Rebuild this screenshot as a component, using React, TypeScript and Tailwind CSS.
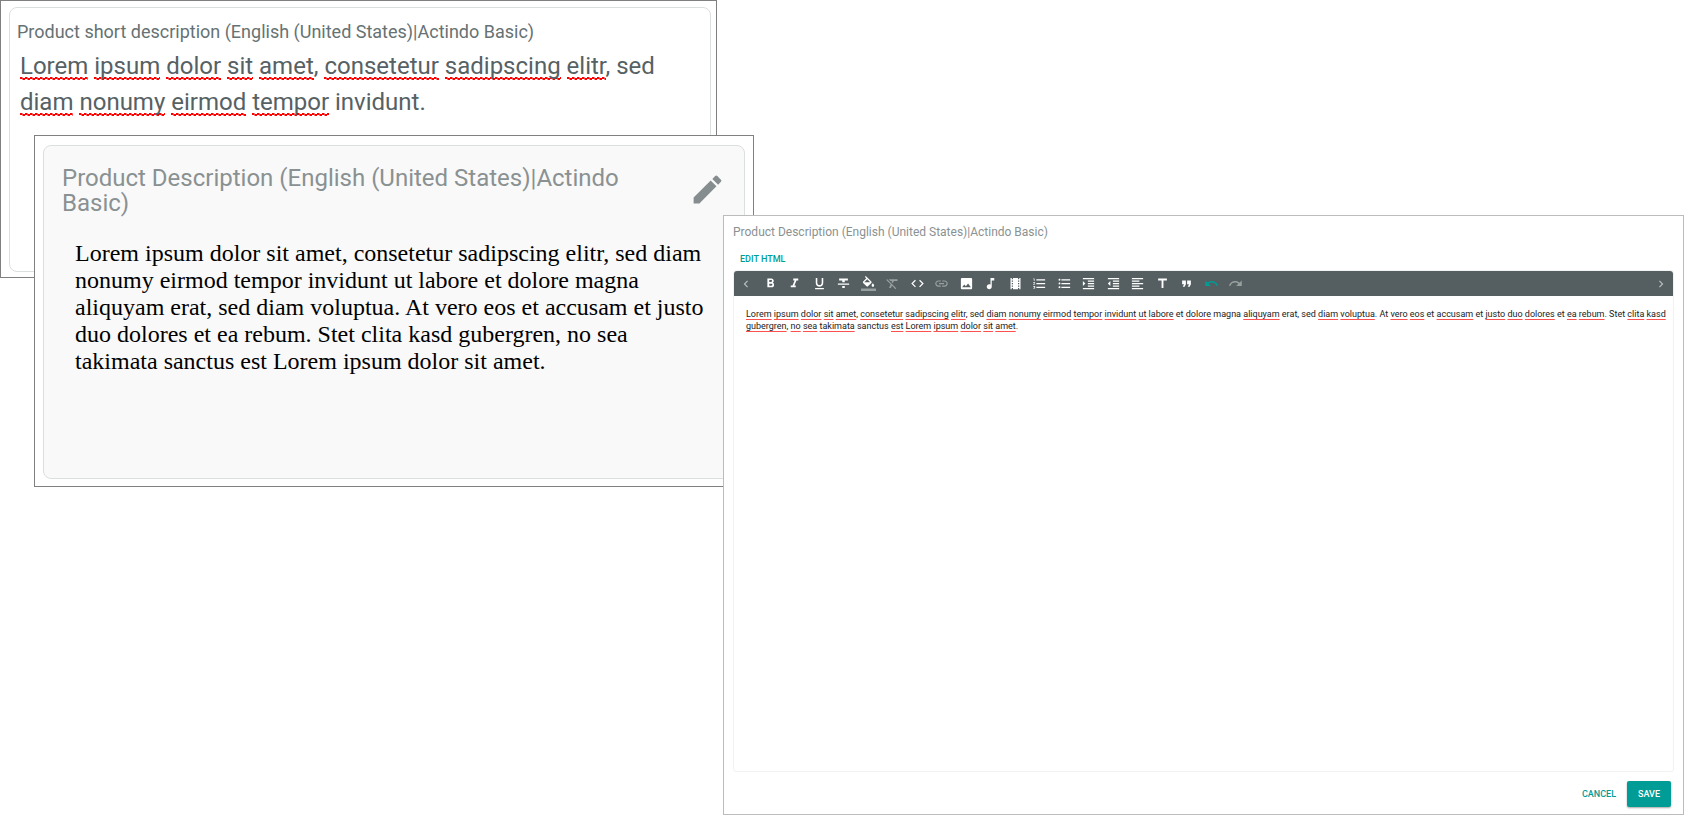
import type { ReactNode } from "react";
import {
  MdChevronLeft,
  MdChevronRight,
  MdCode,
  MdEdit,
  MdFormatAlignLeft,
  MdFormatBold,
  MdFormatClear,
  MdFormatIndentDecrease,
  MdFormatIndentIncrease,
  MdFormatItalic,
  MdFormatListBulleted,
  MdFormatListNumbered,
  MdFormatQuote,
  MdFormatStrikethrough,
  MdFormatUnderlined,
  MdImage,
  MdLink,
  MdMusicNote,
  MdRedo,
  MdTheaters,
  MdTitle,
  MdUndo,
} from "react-icons/md";

const DESCRIPTION =
  "Lorem ipsum dolor sit amet, consetetur sadipscing elitr, sed diam nonumy eirmod tempor invidunt ut labore et dolore magna aliquyam erat, sed diam voluptua. At vero eos et accusam et justo duo dolores et ea rebum. Stet clita kasd gubergren, no sea takimata sanctus est Lorem ipsum dolor sit amet.";

const SHORT_MARKED =
  "[Lorem] [ipsum] [dolor] [sit] [amet], [consetetur] [sadipscing] [elitr], sed [diam] [nonumy] [eirmod] [tempor] invidunt.";

const FULL_MARKED =
  "[Lorem] [ipsum] [dolor] [sit] [amet], [consetetur] [sadipscing] [elitr], sed [diam] [nonumy] [eirmod] [tempor] [invidunt] [ut] [labore] et [dolore] magna [aliquyam] erat, sed [diam] [voluptua]. At [vero] [eos] et [accusam] et [justo] [duo] [dolores] et [ea] [rebum]. Stet [clita] [kasd] [gubergren], [no] [sea] [takimata] sanctus [est] [Lorem] [ipsum] [dolor] [sit] [amet].";

/* Words in square brackets are flagged by the spell checker. */
function Spelled({ text, mark }: { text: string; mark: string }) {
  return (
    <>
      {text.split(/(\[[^\]]+\])/).map((part, i) =>
        part.startsWith("[") ? (
          <span key={i} className={mark}>
            {part.slice(1, -1)}
          </span>
        ) : (
          part
        ),
      )}
    </>
  );
}

const TOOLS: { label: string; icon: ReactNode; tone?: string }[] = [
  { label: "Bold", icon: <MdFormatBold /> },
  { label: "Italic", icon: <MdFormatItalic /> },
  { label: "Underline", icon: <MdFormatUnderlined /> },
  { label: "Strikethrough", icon: <MdFormatStrikethrough /> },
  { label: "Fill colour", icon: <FillIcon /> },
  { label: "Clear formatting", icon: <MdFormatClear />, tone: "text-[#99a0a0]" },
  { label: "Code", icon: <MdCode /> },
  { label: "Link", icon: <MdLink />, tone: "text-[#99a0a0]" },
  { label: "Image", icon: <MdImage /> },
  { label: "Audio", icon: <MdMusicNote /> },
  { label: "Video", icon: <MdTheaters /> },
  { label: "Numbered list", icon: <MdFormatListNumbered /> },
  { label: "Bulleted list", icon: <MdFormatListBulleted /> },
  { label: "Increase indent", icon: <MdFormatIndentIncrease /> },
  { label: "Decrease indent", icon: <MdFormatIndentDecrease /> },
  { label: "Align left", icon: <MdFormatAlignLeft /> },
  { label: "Title", icon: <MdTitle /> },
  { label: "Quote", icon: <MdFormatQuote /> },
  { label: "Undo", icon: <MdUndo />, tone: "text-[#009c95]" },
  { label: "Redo", icon: <MdRedo />, tone: "text-[#99a0a0]" },
];

function FillIcon() {
  return (
    <svg viewBox="0 0 24 24" width="1em" height="1em" fill="currentColor">
      <path d="M16.56 8.94 7.62 0 6.21 1.41l2.38 2.38-5.15 5.15c-.59.59-.59 1.54 0 2.12l5.5 5.5c.29.29.68.44 1.06.44s.77-.15 1.06-.44l5.5-5.5c.59-.58.59-1.53 0-2.12zM5.21 10 10 5.21 14.79 10H5.21zM19 11.5s-2 2.17-2 3.5c0 1.1.9 2 2 2s2-.9 2-2c0-1.33-2-3.5-2-3.5z" />
      <path fill="#99a0a0" d="M0 20h24v4H0z" />
    </svg>
  );
}

function ShortDescriptionWindow() {
  return (
    <section className="absolute top-0 left-0 h-[278px] w-[717px] border border-[#808080] bg-white pt-1.5 pr-[5px] pb-[5px] pl-2">
      <div className="h-full rounded-lg border border-[#dcdfdf] px-[7px] pt-3">
        <h2 id="short-label" className="text-[18px] leading-6 text-[#667273]">
          Product short description (English (United States)|Actindo Basic)
        </h2>
        <div
          role="textbox"
          aria-multiline="true"
          aria-labelledby="short-label"
          contentEditable
          suppressContentEditableWarning
          spellCheck={false}
          className="w-[660px] pt-1 pl-[3px] text-[24px] leading-9 text-[#566164] outline-none"
        >
          <Spelled
            text={SHORT_MARKED}
            mark="bg-[image:linear-gradient(90deg,#ff0000_2px,transparent_3px),linear-gradient(90deg,transparent_2px,#ff0000_3px)] bg-[length:5px_2px] bg-[position:left_bottom_1px,left_bottom] bg-repeat-x"
          />
        </div>
      </div>
    </section>
  );
}

function DescriptionWindow() {
  return (
    <section className="absolute top-[135px] left-[34px] h-[352px] w-[720px] border border-[#808080] bg-white px-2 pt-[9px] pb-[7px]">
      <div className="h-full rounded-lg border border-[#dcdfdf] bg-[#f9f9f9] px-[18px] pt-5">
        <header className="flex items-start justify-between">
          <h2 className="w-[580px] text-[24px] leading-[25px] text-[#8a9192]">
            Product Description (English (United States)|Actindo Basic)
          </h2>
          <button type="button" aria-label="Edit" className="mt-[5px] text-[37px] text-[#868d8f]">
            <MdEdit />
          </button>
        </header>
        <p className="mt-6 px-[13px] font-['Liberation_Serif',serif] text-[24px] leading-[27px] text-black">
          {DESCRIPTION}
        </p>
      </div>
    </section>
  );
}

function EditorWindow() {
  return (
    <section className="absolute top-[215px] right-0 bottom-0 left-[723px] flex flex-col border border-[#bcbcbc] bg-white px-[9px]">
      <h2 id="editor-label" className="mt-2 text-[12px] leading-4 text-[#8a9192]">
        Product Description (English (United States)|Actindo Basic)
      </h2>
      <button
        type="button"
        className="mt-[13px] mb-[5px] ml-[7px] self-start text-[9px] leading-3 font-medium text-[#009c95]"
      >
        EDIT HTML
      </button>
      <div className="flex flex-1 flex-col rounded-[3px] border border-[#f2f2f2]">
        <div
          role="toolbar"
          aria-label="Formatting"
          className="flex h-[25px] items-center rounded-t-[3px] bg-[#555e60] text-white"
        >
          <button type="button" aria-label="Scroll left" className="flex w-6 justify-center text-[14px] text-[#bbbfc0]">
            <MdChevronLeft />
          </button>
          <div className="flex w-[490px]">
            {TOOLS.map((tool) => (
              <button
                key={tool.label}
                type="button"
                aria-label={tool.label}
                className={`flex flex-1 justify-center text-[15px] ${tool.tone ?? "text-white"}`}
              >
                {tool.icon}
              </button>
            ))}
          </div>
          <button type="button" aria-label="Scroll right" className="ml-auto flex w-6 justify-center text-[14px] text-[#bbbfc0]">
            <MdChevronRight />
          </button>
        </div>
        <div
          role="textbox"
          aria-multiline="true"
          aria-labelledby="editor-label"
          contentEditable
          suppressContentEditableWarning
          spellCheck={false}
          className="flex-1 pt-3 pr-1 pl-3 text-[9px] leading-3 text-[#222222] outline-none"
        >
          <Spelled
            text={FULL_MARKED}
            mark="underline decoration-[#ff5050] decoration-1 underline-offset-2 [text-decoration-skip-ink:none]"
          />
        </div>
      </div>
      <footer className="flex items-center justify-end gap-[11px] pt-[9px] pr-[3px] pb-[7px] text-[9px] leading-3 font-medium">
        <button type="button" className="text-[#009c95]">
          CANCEL
        </button>
        <button
          type="button"
          className="h-[26px] w-11 rounded-[2px] bg-[#009c95] text-white shadow-[0_1px_2px_rgba(0,0,0,0.35)]"
        >
          SAVE
        </button>
      </footer>
    </section>
  );
}

export default function App() {
  return (
    <main className="relative h-screen overflow-hidden bg-white font-['Roboto',sans-serif]">
      <ShortDescriptionWindow />
      <DescriptionWindow />
      <EditorWindow />
    </main>
  );
}
